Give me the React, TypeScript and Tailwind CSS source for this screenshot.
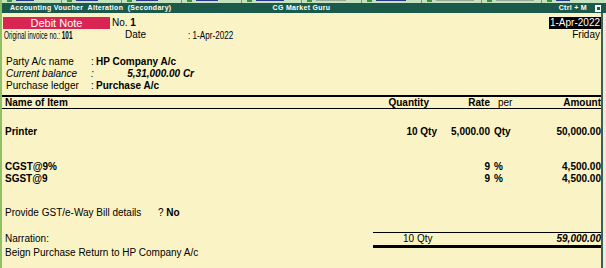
import React from "react";

const tabs = [
  { w: 18, g: false },
  { w: 22, g: false },
  { w: 22, g: false },
  { w: 22, g: false },
  { w: 28, g: false },
  { w: 30, g: true },
  { w: 30, g: false },
  { w: 38, g: true },
  { w: 38, g: true },
  { w: 14, g: false },
];

function ItemRow({
  name,
  qty,
  rate,
  per,
  amt,
}: {
  name: string;
  qty?: string;
  rate?: string;
  per?: string;
  amt?: string;
}) {
  return (
    <div className="flex h-[12px] items-center font-bold leading-[12px]">
      <div className="flex-1 pl-[3px]">{name}</div>
      <div className="w-[64px] text-right">{qty}</div>
      <div className="w-[53px] text-right">{rate}</div>
      <div className="w-[30px] pl-[4px]">{per}</div>
      <div className="w-[81px] text-right">{amt}</div>
    </div>
  );
}

export default function App() {
  return (
    <div
      className="relative flex h-[268px] w-[606px] overflow-hidden bg-[#faf3c5] text-[10px] leading-[12px] text-black"
      style={{ fontFamily: '"Liberation Sans", Arial, sans-serif' }}
    >
      {/* left green border */}
      <div className="h-full w-[2px] bg-[#8fc065]" />

      {/* main column */}
      <div className="flex w-[599px] flex-col">
        {/* tab strip (cut off at the top) */}
        <div className="flex h-[3px] overflow-hidden bg-[#c3e2bd]">
          <div className="w-[1px] bg-[#7e8e7e]" />
          {tabs.map((tb, i) => (
            <div
              key={i}
              className="flex h-[3px] w-[60px] shrink-0 items-start gap-[4px] overflow-hidden border-r border-[#7e8e7e] bg-[#c3e2bd] pl-[5px]"
            >
              <div className="h-[2px] w-[5px] bg-[#2e9a3a]" />
              <div className={`h-[1px] ${tb.g ? "bg-[#9aa89a]" : "bg-[#2a3a8a]"}`} style={{ width: tb.w }} />
            </div>
          ))}
        </div>

        {/* title bar */}
        <div className="grid h-[10px] grid-cols-[1fr_auto_1fr] items-center bg-[#1b5a4a] text-[7px] font-bold leading-[10px] tracking-[0.3px] text-white">
          <div className="whitespace-nowrap pl-[8px]">Accounting Voucher&nbsp; Alteration&nbsp; (Secondary)</div>
          <div className="whitespace-nowrap">CG Market Guru</div>
          <div className="flex items-center justify-end gap-[8px]">
            <span className="whitespace-nowrap">Ctrl + M</span>
            <span className="flex h-[7px] w-[6px] items-center justify-center bg-white">
              <span className="h-[3px] w-[3px] bg-[#1b5a4a]" />
            </span>
          </div>
        </div>

        {/* body */}
        <div className="flex flex-1 flex-col">
          {/* header rows */}
          <div className="flex pt-[4px]">
            <div className="flex flex-1 flex-col">
              <div className="flex h-[12px] items-center">
                <div className="ml-[1px] flex h-[12px] w-[107px] items-center justify-center bg-[#d82552] text-[11px] text-white">
                  Debit Note
                </div>
                <div className="pl-[2px]">
                  No. <span className="font-bold">1</span>
                </div>
              </div>
              <div className="flex h-[12px] items-center">
                <div className="w-[123px] pl-[2px]">
                  <span className="inline-block origin-left scale-x-[0.58] whitespace-nowrap text-[11px]">
                    Original invoice no.: <span className="font-bold">101</span>
                  </span>
                </div>
                <div className="w-[63px]">Date</div>
                <div>
                  <span className="inline-block origin-left scale-x-[0.74] whitespace-nowrap text-[11px]">: 1-Apr-2022</span>
                </div>
              </div>
            </div>
            <div className="flex flex-col items-end">
              <div className="flex h-[12px] items-center bg-black px-[1px] text-white">1-Apr-2022</div>
              <div className="flex h-[12px] items-center pr-[1px]">Friday</div>
            </div>
          </div>

          {/* party block */}
          <div className="mt-[15px] flex flex-col pl-[4px]">
            <div className="flex h-[12px] items-center">
              <div className="w-[85px]">Party A/c name</div>
              <div className="w-[5px]">:</div>
              <div className="font-bold">HP Company A/c</div>
            </div>
            <div className="flex h-[12px] items-center italic">
              <div className="w-[85px]">Current balance</div>
              <div className="w-[5px]">:</div>
              <div className="w-[98px] text-right font-bold">5,31,000.00 Cr</div>
            </div>
            <div className="flex h-[12px] items-center">
              <div className="w-[85px]">Purchase ledger</div>
              <div className="w-[5px]">:</div>
              <div className="font-bold">Purchase A/c</div>
            </div>
          </div>

          {/* items table */}
          <div className="mt-[3px] h-[2px] bg-black" />
          <div className="flex h-[12px] items-center border-b border-black font-bold leading-[12px]">
            <div className="flex-1 pl-[3px]">Name of Item</div>
            <div className="w-[64px] pr-[8px] text-right">Quantity</div>
            <div className="w-[53px] text-right">Rate</div>
            <div className="w-[30px] pl-[8px] font-normal">per</div>
            <div className="w-[81px] text-right">Amount</div>
          </div>

          <div className="mt-[17px]">
            <ItemRow name="Printer" qty="10 Qty" rate="5,000.00" per="Qty" amt="50,000.00" />
          </div>
          <div className="mt-[23px]">
            <ItemRow name="CGST@9%" rate="9" per="%" amt="4,500.00" />
            <ItemRow name="SGST@9" rate="9" per="%" amt="4,500.00" />
          </div>

          <div className="mt-[22px] flex h-[12px] items-center pl-[3px]">
            <div className="w-[153px]">Provide GST/e-Way Bill details</div>
            <div>
              ? <span className="font-bold">No</span>
            </div>
          </div>

          {/* narration + totals */}
          <div className="mt-[13px] flex">
            <div className="flex flex-1 flex-col pl-[3px] pt-[1px]">
              <div className="flex h-[12px] items-center">Narration:</div>
              <div className="mt-[2px] flex h-[12px] items-center">Beign Purchase Return to HP Company A/c</div>
            </div>
            <div className="w-[228px] self-start border-t border-b-[3px] border-black border-b-double">
              <div className="flex h-[12px] items-center justify-between pl-[30px]">
                <span>10 Qty</span>
                <span className="font-bold italic">59,000.00</span>
              </div>
            </div>
          </div>
        </div>
      </div>

      {/* right border */}
      <div className="flex w-[5px] flex-col">
        <div className="h-[3px] bg-[#c3e2bd]" />
        <div className="h-[10px] bg-[#1b5a4a]" />
        <div className="flex flex-1">
          <div className="w-[2px] bg-[#3d5f57]" />
          <div className="flex-1 bg-[#ecebdc]" />
        </div>
      </div>
    </div>
  );
}
